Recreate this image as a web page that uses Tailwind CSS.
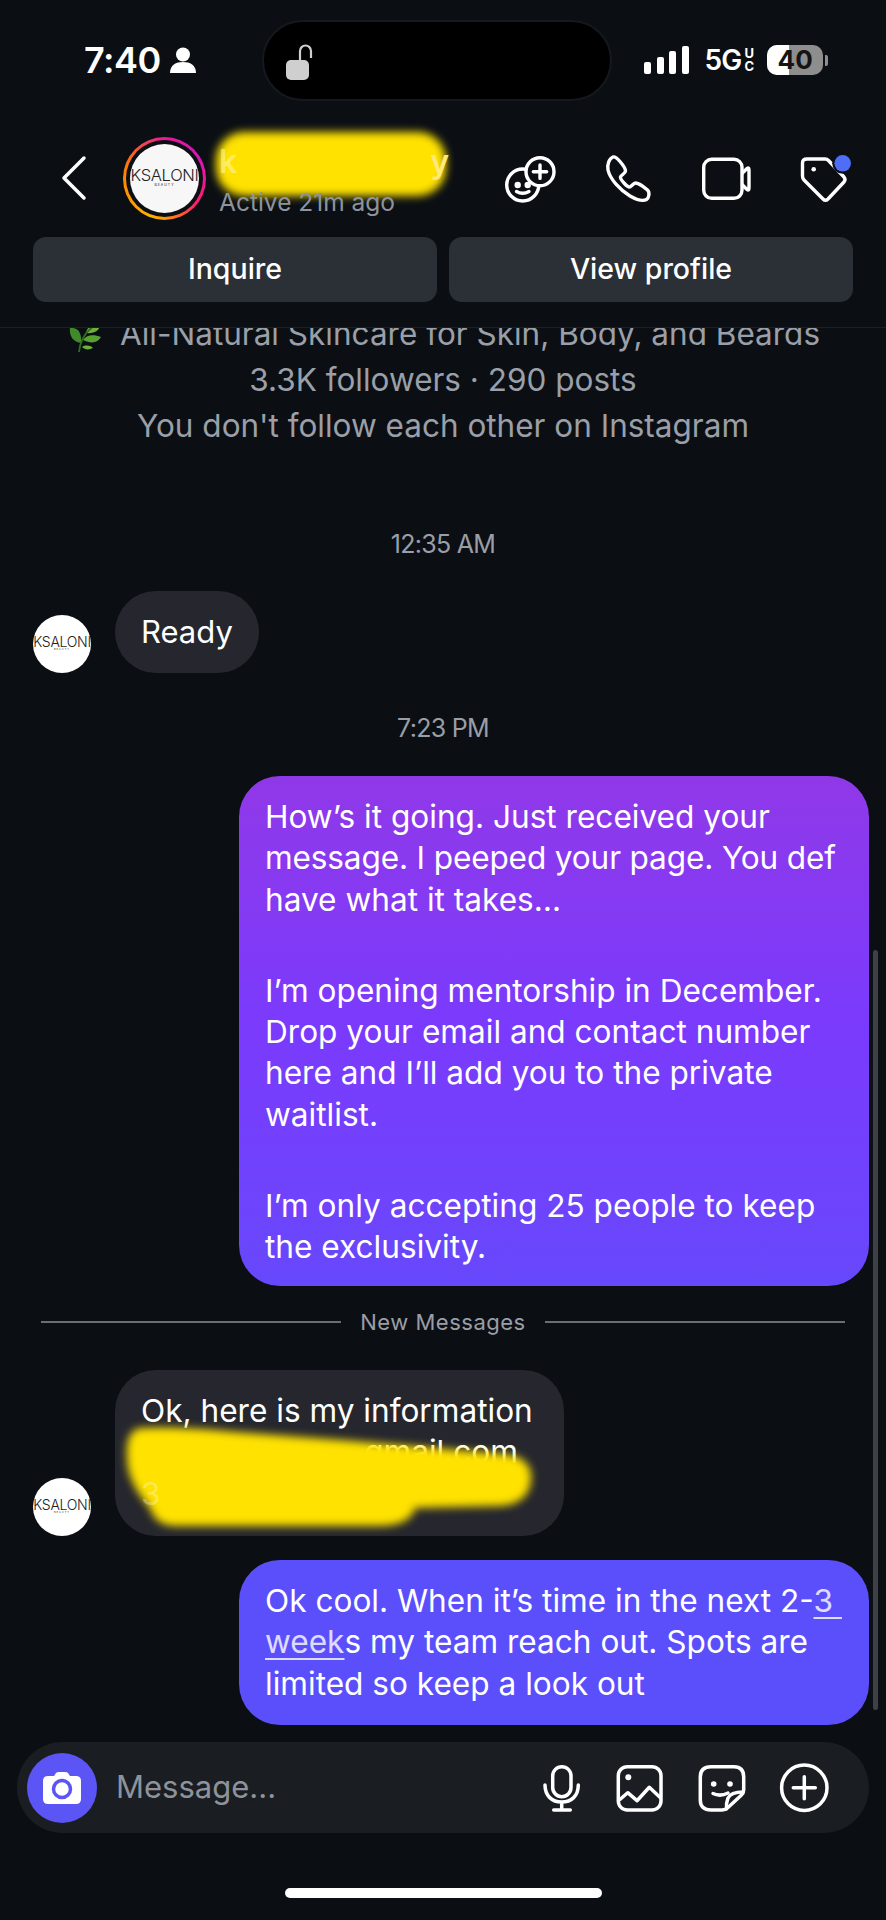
<!doctype html>
<html>
<head>
<meta charset="utf-8">
<script src="https://cdn.jsdelivr.net/npm/@tailwindcss/browser@4"></script>
</head>
<body class="bg-[#0b0f14]">
<div class="relative w-[886px] h-[1920px] overflow-hidden bg-[#0b0f14] text-white flex flex-col font-['Inter',sans-serif]">

  <!-- top chrome -->
  <header class="relative z-10 h-[328px] shrink-0 border-b border-[#1c2026] bg-[#0b0f14]">
    <div class="h-[120px] relative flex items-center">
      <div class="pl-[84px] w-[262px] flex items-center">
        <span class="text-[36px] font-semibold tracking-[-0.500px] leading-none">7:40</span>
        <svg class="ml-[8px]" width="28" height="28" viewBox="0 0 28 28" fill="#fff"><circle cx="14" cy="8.500" r="7"/><path d="M1 27c0-8 6-11 13-11s13 3 13 11z"/></svg>
      </div>
      <div class="relative w-[350px] h-[81px] rounded-full bg-black border-2 border-[#15181e]">
        <svg class="absolute left-[21px] top-[22px]" width="32" height="36" viewBox="0 0 32 36" fill="none"><rect x="1" y="16" width="23" height="20" rx="5" fill="#cfcfcf"/><path d="M15 17V7a5.500 5.500 0 0 1 11 0v7" stroke="#cfcfcf" stroke-width="2.200"/></svg>
      </div>
      <div class="flex items-center pl-[32px]">
        <div class="flex items-end gap-[5.500px] h-[28px]">
          <div class="w-[7px] h-[12px] rounded-[2px] bg-white"></div>
          <div class="w-[7px] h-[17px] rounded-[2px] bg-white"></div>
          <div class="w-[7px] h-[23px] rounded-[2px] bg-white"></div>
          <div class="w-[7px] h-[28px] rounded-[2px] bg-white"></div>
        </div>
        <span class="ml-[16px] text-[28px] font-semibold leading-none tracking-[-0.800px]">5G</span>
        <span class="ml-[3px] flex flex-col text-[13px] font-bold leading-[13px]"><span>U</span><span>C</span></span>
        <div class="ml-[13px] relative w-[56px] h-[30px] rounded-[10px] overflow-hidden bg-[#8e8e8e] flex">
          <div class="w-[22px] bg-white"></div>
          <span class="absolute inset-0 flex items-center justify-center text-[#141414] text-[26px] font-bold leading-none">40</span>
        </div>
        <div class="ml-[2px] w-[3px] h-[11px] rounded-r-[2px] bg-[#8e8e8e]"></div>
      </div>
    </div>

    <div class="h-[116px] flex items-center">
      <svg class="ml-[60px] shrink-0" width="28" height="46" viewBox="0 0 28 46" fill="none"><path d="M24 3 4 23l20 20" stroke="#fff" stroke-width="3.500" stroke-linecap="round" stroke-linejoin="round"/></svg>
      <div class="ml-[35px] w-[83px] h-[83px] rounded-full shrink-0 p-[3px] bg-[conic-gradient(from_200deg,#ffb300,#ff7a00_25%,#e5189a_45%,#d914b8_60%,#ff1d6b_80%,#ff9a00_95%,#ffb300)]">
        <div class="w-full h-full rounded-full bg-[#0b0f14] p-[4px]">
          <div class="w-full h-full rounded-full bg-[#f7f7f7] overflow-hidden flex flex-col items-center justify-center text-[#222]">
            <span class="text-[16.500px] leading-[15px] font-light tracking-[-0.300px] whitespace-nowrap">KSALONI</span>
            <span class="text-[3.500px] leading-[5px] tracking-[1px]">BEAUTY</span>
          </div>
        </div>
      </div>
      <div class="relative ml-[13px] w-[240px] h-[74px] shrink-0">
        <div class="absolute left-[-3px] top-[-9px] w-[230px] h-[64px] rounded-[28px] bg-[#ffe200] blur-[4px]"></div>
        <div class="relative flex justify-between pr-[10px] pt-[4px] text-[32px] leading-[34px] font-semibold text-[#fff6a0]/60"><span>k</span><span class="text-[#ffe978]">y</span></div>
        <div class="relative text-[24.500px] leading-[30px] mt-[8px] text-[#8e949c] whitespace-nowrap">Active 21m ago</div>
      </div>
      <div class="flex items-center ml-[45px]">
        <svg width="56" height="56" viewBox="0 0 56 56" fill="none" stroke="#fff" stroke-width="3.400" stroke-linecap="round">
          <circle cx="18.700" cy="35" r="16"/>
          <circle cx="36" cy="21.700" r="14" fill="#0b0f14"/>
          <path d="M36 15v13.400M29.300 21.700h13.400"/>
          <circle cx="13.700" cy="35" r="1.500" fill="#fff"/><circle cx="23.700" cy="35" r="1.500" fill="#fff"/>
          <path d="M12.500 41.500q6 3.500 12.500 0"/>
        </svg>
        <svg class="ml-[42px]" width="56" height="56" viewBox="0 0 56 56" fill="none" stroke="#fff" stroke-width="3.400" stroke-linejoin="round"><path d="M11 7C13 6.500 15 8 18 11.500C21 15 23.500 18.500 23.500 21C23.500 23.500 19 25 18.500 27C18 29 24 36 27 37C29 37.500 31 33 33.500 33C36 33 42 37 45.500 40C48 42.500 47 48 44.500 49.500C41 51.500 35 50 28 46C18 40 8 29 6 20C5 15 7 8.500 11 7Z"/></svg>
        <svg class="ml-[42px]" width="56" height="56" viewBox="0 0 56 56" fill="none" stroke="#fff" stroke-width="3.400" stroke-linejoin="round"><rect x="3.700" y="9.300" width="38.300" height="39" rx="8"/><path d="M42 23.500 47 18.500Q49 17 49 20V38Q49 41 47 39.500L42 34.500"/></svg>
        <svg class="ml-[43px]" width="56" height="56" viewBox="0 0 56 56" fill="none" stroke="#fff" stroke-width="3.400" stroke-linejoin="round"><path d="M8 9L26 9Q28 9 29.500 10.500L45 27Q47 29.500 45 32L29 49Q26.500 51.500 24 49L5 30Q3.500 28.500 3.500 26L3.500 13Q3.500 9 8 9Z"/><circle cx="14.700" cy="19.300" r="2.300" fill="#fff" stroke="none"/><circle cx="43.700" cy="13.300" r="10.500" fill="#0b0f14" stroke="none"/><circle cx="43.700" cy="13.300" r="8.300" fill="#4f6ef7" stroke="none"/></svg>
      </div>
    </div>

    <div class="flex gap-[12px] px-[33px] mt-[1px]">
      <div class="w-[404px] h-[65px] rounded-[13px] bg-[#2b2f36] flex items-center justify-center text-[28.500px] font-medium">Inquire</div>
      <div class="w-[404px] h-[65px] rounded-[13px] bg-[#2b2f36] flex items-center justify-center text-[28.500px] font-medium">View profile</div>
    </div>
  </header>

  <!-- thread -->
  <main class="relative flex-1 min-h-0 overflow-hidden flex flex-col">
    <div class="mt-[-17px] text-center text-[31.500px] leading-[46px] text-[#9a9fa8] whitespace-nowrap">
      <div class="flex items-center justify-center">
        <svg class="mr-[16px]" width="38" height="36" viewBox="0 0 38 36"><path d="M4 12c8-1 12 5 11 15C8 26 3 21 4 12z" fill="#3f8a2a"/><path d="M20 17c1-6 6-9 14-9 0 6-5 10-14 9z" fill="#6bb13a"/><path d="M17 24c3-5 10-6 18-3-3 6-10 7-18 3z" fill="#57a032"/><path d="M16 31c3-2 8-2 11 1-4 2-8 2-11-1z" fill="#6bb13a"/><path d="M13 36C14 26 19 16 28 10" stroke="#2f6e1e" stroke-width="1.800" fill="none"/></svg>
        <span>All-Natural Skincare for Skin, Body, and Beards</span>
      </div>
      <div>3.3K followers · 290 posts</div>
      <div>You don't follow each other on Instagram</div>
    </div>

    <div class="mt-[81px] h-[30px] flex items-center justify-center text-[25px] tracking-[-0.700px] text-[#9a9ea6]">12:35 AM</div>

    <div class="mt-[31px] h-[82px] flex items-end pl-[33px]">
      <div class="w-[58px] h-[58px] rounded-full bg-white overflow-hidden flex flex-col items-center justify-center text-[#222]">
        <span class="text-[14px] leading-[12px] font-light tracking-[-0.300px] whitespace-nowrap">KSALONI</span>
        <span class="text-[2.500px] leading-[4px] tracking-[1px]">BEAUTY</span>
      </div>
      <div class="ml-[24px] h-[82px] px-[26px] rounded-[41px] bg-[#26272e] flex items-center text-[31px]">Ready</div>
    </div>

    <div class="mt-[41px] h-[30px] flex items-center justify-center text-[25px] tracking-[-0.700px] text-[#9a9ea6]">7:23 PM</div>

    <div class="mt-[32px] ml-[239px] w-[630px] h-[510px] rounded-[41px] bg-gradient-to-b from-[#9038e8] via-[#7a3afd] to-[#6748fb] px-[26px] pt-[20px] text-[31.600px] leading-[41.300px] whitespace-nowrap">
      <p>How’s it going. Just received your<br><span class="tracking-[-0.150px]">message. I peeped your page. You def</span><br>have what it takes…</p>
      <p class="mt-[50px]">I’m opening mentorship in December.<br>Drop your email and contact number<br>here and I’ll add you to the private<br>waitlist.</p>
      <p class="mt-[50px]">I’m only accepting 25 people to keep<br>the exclusivity.</p>
    </div>

    <div class="mt-[21px] h-[30px] px-[41px] flex items-center">
      <div class="w-[300px] h-[2px] bg-[#6a6e74]"></div>
      <span class="flex-1 text-center text-[22px] tracking-[0.500px] text-[#9a9ea6]">New Messages</span>
      <div class="w-[300px] h-[2px] bg-[#6a6e74]"></div>
    </div>

    <div class="mt-[33px] h-[166px] flex items-end pl-[33px]">
      <div class="w-[58px] h-[58px] rounded-full bg-white overflow-hidden flex flex-col items-center justify-center text-[#222]">
        <span class="text-[14px] leading-[12px] font-light tracking-[-0.300px] whitespace-nowrap">KSALONI</span>
        <span class="text-[2.500px] leading-[4px] tracking-[1px]">BEAUTY</span>
      </div>
      <div class="relative ml-[24px] w-[449px] h-[166px] rounded-[41px] bg-[#26272e] px-[26px] pt-[20px] text-[31.600px] leading-[41.300px] whitespace-nowrap">
        <div>Ok, here is my information</div>
        <div class="text-right pr-[20px]">gmail.com</div>
        <svg class="absolute left-0 top-0 blur-[4px]" width="449" height="166" viewBox="0 0 449 166"><path d="M26 58Q60 56 120 62L225 70L390 84Q418 88 416 110Q414 134 385 136L300 138Q296 156 262 156L62 156Q40 156 35 138Q12 112 12 88Q10 60 26 58Z" fill="#ffe200"/></svg>
        <div class="relative text-white/30">3</div>
      </div>
    </div>

    <div class="mt-[24px] ml-[239px] w-[630px] h-[165px] rounded-[41px] bg-[#5a4ffb] px-[26px] pt-[20px] text-[31.600px] leading-[41.300px] whitespace-nowrap">
      Ok cool. When it’s time in the next 2-<span class="underline decoration-2 underline-offset-[5px] text-white/80">3&nbsp;</span><br><span class="underline decoration-2 underline-offset-[5px] text-white/80">week</span>s my team reach out. Spots are<br>limited so keep a look out
    </div>

    <div class="absolute left-[873px] top-[622px] w-[5px] h-[760px] rounded-full bg-[#3d4045]"></div>

    <div class="mt-[17px] ml-[17px] w-[852px] h-[91px] rounded-[46px] bg-[#1a1d22] flex items-center">
      <div class="ml-[10px] w-[70px] h-[70px] rounded-full bg-[#5b55f5] flex items-center justify-center">
        <svg width="40" height="40" viewBox="0 0 40 40"><path d="M6 7h6l2-3q1-1 3-1h6q2 0 3 1l2 3h6q5 0 5 5v18q0 5-5 5H6q-5 0-5-5V12q0-5 5-5z" fill="#fff" transform="translate(0 1)"/><circle cx="20" cy="21" r="8.500" fill="none" stroke="#5b55f5" stroke-width="3.500"/></svg>
      </div>
      <span class="ml-[19px] text-[31px] text-[#8e939b]">Message...</span>
      <div class="ml-auto flex items-center mr-[37px]">
        <svg width="56" height="56" viewBox="0 0 56 56" fill="none" stroke="#fff" stroke-width="3.500" stroke-linecap="round"><rect x="21.700" y="6.700" width="18.300" height="30" rx="9.100"/><path d="M14 25c0 11 7 17 16.700 17S47.300 36 47.300 25M30.700 42v7.500M22.700 50h16.600"/></svg>
        <svg class="ml-[24px]" width="56" height="56" viewBox="0 0 56 56" fill="none" stroke="#fff" stroke-width="3.500" stroke-linejoin="round"><rect x="7.300" y="6.700" width="42.700" height="43.300" rx="9"/><circle cx="17.300" cy="17.300" r="3" fill="#fff" stroke="none"/><path d="M8.300 40 16.700 32.700 26 40.700 38.300 27.300 50 38.300"/></svg>
        <svg class="ml-[24px]" width="56" height="56" viewBox="0 0 56 56" fill="none" stroke="#fff" stroke-width="3.500" stroke-linejoin="round" stroke-linecap="round"><path d="M20 6.700H43Q52.700 6.700 52.700 17V30Q52.700 33 50 35.500L37 47.500Q34.500 50 31 50H20Q9.300 50 9.300 40V17Q9.300 6.700 20 6.700Z"/><path d="M52 32Q40 32 37 38Q35 43 35.500 49"/><path d="M22 33.500Q29 37 37 33"/><circle cx="22.700" cy="24" r="2.800" fill="#fff" stroke="none"/><circle cx="39" cy="24" r="2.800" fill="#fff" stroke="none"/></svg>
        <svg class="ml-[29px]" width="56" height="56" viewBox="0 0 56 56" fill="none" stroke="#fff" stroke-width="3.500" stroke-linecap="round"><circle cx="28.300" cy="27.700" r="22.700"/><path d="M28.300 16.700v22M17.300 27.700h22"/></svg>
      </div>
    </div>

    <div class="mt-[55px] mx-auto w-[317px] h-[10px] rounded-full bg-white"></div>
  </main>
</div>
</body>
</html>
